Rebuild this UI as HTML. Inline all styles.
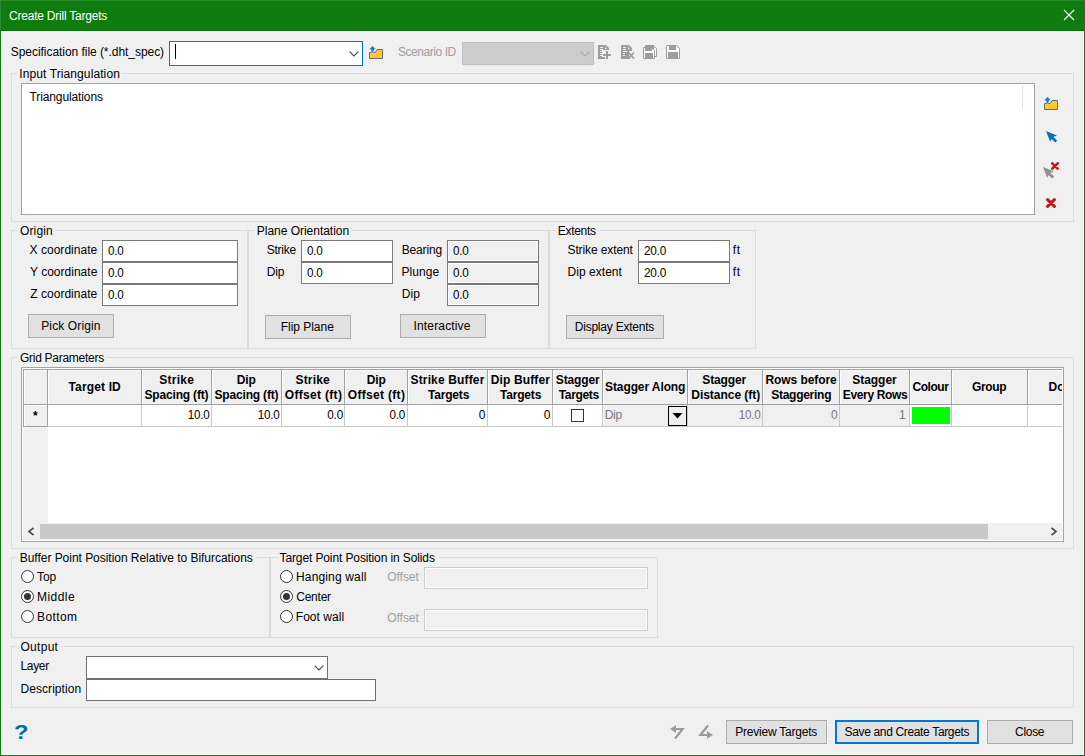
<!DOCTYPE html>
<html lang="en">
<head>
<meta charset="utf-8">
<title>Create Drill Targets</title>
<style>
html,body{margin:0;padding:0;}
body{width:1085px;height:756px;overflow:hidden;background:#f0f0f0;font-family:"Liberation Sans",sans-serif;font-size:12px;color:#000;position:relative;}
div,span,svg{position:absolute;box-sizing:border-box;}
#win{left:0;top:0;width:1085px;height:756px;border:1px solid #107c10;border-top:none;background:#f0f0f0;}
#title{left:0;top:0;width:1085px;height:31px;background:#107c10;}
.t{white-space:nowrap;line-height:14px;height:14px;font-size:12px;}
.g{color:#787878;}
.g2{color:#a0a0a0;}
.w{color:#fff;}
.b{font-weight:bold;}
.gl{background:#f0f0f0;}
.grp{border:1px solid #dcdcdc;}
.in{border:1px solid #7a7a7a;background:#fff;}
.ro{border:1px solid #7a7a7a;background:#f0f0f0;box-shadow:inset 0 0 0 1px #fff;}
.dis{border:1px solid #cccccc;background:#f0f0f0;box-shadow:inset 0 0 0 1px #fff;}
.btn{border:1px solid #adadad;background:#e1e1e1;}
.hc{border-right:1px solid #a0a0a0;border-bottom:1px solid #a0a0a0;background:#f0f0f0;box-shadow:inset 1px 1px 0 #fff;}
.dc{border-right:1px solid #c8c8c8;border-bottom:1px solid #c8c8c8;background:#fff;}
.dcd{background:#f0f0f0;}
.rad{width:13px;height:13px;border:1px solid #333;border-radius:50%;background:#fff;}
.rad i{position:absolute;left:2px;top:2px;width:7px;height:7px;border-radius:50%;background:#333;}
</style>
</head>
<body>
<div id="win"></div>
<div id="title"></div>
<div style="left:0;top:0;width:1085px;height:1px;background:#2b8a2b"></div>
<div style="left:0;top:0;width:1px;height:30px;background:#2b8a2b"></div>
<div style="left:1px;top:30px;width:1083px;height:1px;background:#007000"></div>
<div style="left:1px;top:31px;width:1083px;height:724px;border:1px solid #fcf8fc"></div>
<svg style="left:1063px;top:9px" width="12" height="12" viewBox="0 0 12 12"><path d="M1 1 L11 11 M11 1 L1 11" stroke="#fff" stroke-width="1.1" fill="none"/></svg>
<div class="grp" style="left:11px;top:73px;width:1063px;height:149px;"></div>
<div class="grp" style="left:11px;top:230px;width:237px;height:119px;"></div>
<div class="grp" style="left:248px;top:230px;width:301px;height:119px;"></div>
<div class="grp" style="left:549px;top:230px;width:207px;height:119px;"></div>
<div class="grp" style="left:11px;top:357px;width:1063px;height:192px;"></div>
<div class="grp" style="left:11px;top:557px;width:259px;height:81px;"></div>
<div class="grp" style="left:270px;top:557px;width:388px;height:81px;"></div>
<div class="grp" style="left:11px;top:646px;width:1063px;height:62px;"></div>
<div class="in" style="left:169px;top:41px;width:194px;height:25px;border-color:#0078d7;"></div>
<div style="left:175px;top:44px;width:1px;height:15px;background:#000"></div>
<svg style="left:349px;top:51px" width="10" height="6" viewBox="0 0 10 6"><path d="M0.7 0.7 L5 5 L9.3 0.7" stroke="#444" stroke-width="1.1" fill="none"/></svg>
<div class="" style="left:462px;top:42px;width:132px;height:23px;background:#ccc;border:1px solid #bfbfbf;"></div>
<svg style="left:580px;top:51px" width="10" height="6" viewBox="0 0 10 6"><path d="M0.7 0.7 L5 5 L9.3 0.7" stroke="#a6a6a6" stroke-width="1.1" fill="none"/></svg>
<svg style="left:369px;top:46px;overflow:visible" width="14" height="14" viewBox="0 0 14 14"><path d="M0.5 6.5 H6.2 L8 3.5 H13.5 V12.5 H0.5 Z" fill="#fcc934" stroke="#6b6b6b" stroke-width="1"/><path d="M3.5 -0.2 L7.2 3.6 H5 V6 H2 V3.6 H-0.2 Z" fill="#157ab8" stroke="#f0f0f0" stroke-width="0.6"/></svg>
<svg style="left:1044px;top:97px;overflow:visible" width="14" height="14" viewBox="0 0 14 14"><path d="M0.5 6.5 H6.2 L8 3.5 H13.5 V12.5 H0.5 Z" fill="#fcc934" stroke="#6b6b6b" stroke-width="1"/><path d="M3.5 -0.2 L7.2 3.6 H5 V6 H2 V3.6 H-0.2 Z" fill="#157ab8" stroke="#f0f0f0" stroke-width="0.6"/></svg>
<svg style="left:598px;top:45px" width="14" height="14" viewBox="0 0 14 14" shape-rendering="crispEdges"><path d="M0 0 H8 L11 3 V14 H0 Z" fill="#9d9d9d" shape-rendering="auto"/><path d="M7 2 L9 4 H7 Z" fill="#f0f0f0" shape-rendering="auto"/><rect x="2" y="2" width="3" height="1" fill="#f0f0f0"/><rect x="2" y="4" width="3" height="1" fill="#f0f0f0"/><rect x="2" y="6" width="4" height="1" fill="#f0f0f0"/><rect x="2" y="8" width="2" height="1" fill="#f0f0f0"/><rect x="2" y="10" width="2" height="1" fill="#f0f0f0"/><rect x="4" y="5" width="10" height="9" fill="#f0f0f0"/><rect x="0" y="12" width="7" height="2" fill="#9d9d9d"/><rect x="8" y="6" width="2" height="8" fill="#9d9d9d"/><rect x="5" y="9" width="8" height="2" fill="#9d9d9d"/></svg>
<svg style="left:621px;top:45px" width="14" height="14" viewBox="0 0 14 14" shape-rendering="crispEdges"><path d="M0 0 H8 L11 3 V14 H0 Z" fill="#9d9d9d" shape-rendering="auto"/><path d="M7 2 L9 4 H7 Z" fill="#f0f0f0" shape-rendering="auto"/><rect x="2" y="2" width="3" height="1" fill="#f0f0f0"/><rect x="2" y="4" width="3" height="1" fill="#f0f0f0"/><rect x="2" y="6" width="4" height="1" fill="#f0f0f0"/><rect x="2" y="8" width="2" height="1" fill="#f0f0f0"/><rect x="2" y="10" width="2" height="1" fill="#f0f0f0"/><rect x="6" y="6" width="8" height="8" fill="#f0f0f0"/><rect x="6" y="6" width="2" height="8" fill="#9d9d9d"/><path d="M7.5 7.5 L13 13.5 M13 7.5 L7.5 13.5" stroke="#9d9d9d" stroke-width="1.8" fill="none" shape-rendering="auto"/></svg>
<svg style="left:643px;top:45px" width="14" height="14" viewBox="0 0 14 14"><g transform="translate(2,0)"><path d="M0.5 0.5 H8.5 L11.5 3.5 V11.5 H0.5 Z" fill="#fff" stroke="#9d9d9d" stroke-width="1"/><rect x="1" y="0" width="8" height="6" fill="#9d9d9d"/></g><g transform="translate(0,2)"><path d="M0.5 0.5 H8.5 L11.5 3.5 V11.5 H0.5 Z" fill="#fff" stroke="#9d9d9d" stroke-width="1"/><rect x="2" y="0" width="7" height="4" fill="#9d9d9d"/><rect x="2" y="6" width="8" height="6" fill="#9d9d9d"/></g></svg>
<svg style="left:666px;top:45px" width="14" height="14" viewBox="0 0 14 14"><g transform="translate(0,0)"><path d="M0.5 0.5 H10.5 L13.5 3.5 V13.5 H0.5 Z" fill="#fff" stroke="#9d9d9d" stroke-width="1"/><rect x="3" y="0" width="7" height="5" fill="#9d9d9d"/><rect x="2" y="7" width="10" height="7" fill="#9d9d9d"/></g></svg>
<div class="in" style="left:21px;top:83px;width:1014px;height:132px;border-color:#a0a4ad;"></div>
<div style="left:1022px;top:85px;width:1px;height:24px;background:#e5e5e5"></div>
<svg style="left:1046px;top:131px" width="12" height="12" viewBox="0 0 12 12"><path d="M0 0 L11 4.5 L7.3 6 L11.2 9.6 L9.2 11.6 L5.5 7.9 L4.3 11 Z" fill="#0b72ad"/></svg>
<svg style="left:1043px;top:162px;" width="17" height="17" viewBox="0 0 17 17"><path transform="translate(0,5)" d="M0 0 L11 4.5 L7.3 6 L11.2 9.6 L9.2 11.6 L5.5 7.9 L4.3 11 Z" fill="#8f8f8f"/><path d="M9.3 1.3 L14.7 6.7 M14.7 1.3 L9.3 6.7" stroke="#c4161c" stroke-width="2.6" stroke-linecap="round" fill="none"/></svg>
<svg style="left:1046px;top:198px" width="10" height="10" viewBox="0 0 10 10"><path d="M1.6 1.6 L8.4 8.4 M8.4 1.6 L1.6 8.4" stroke="#c4161c" stroke-width="3" stroke-linecap="round" fill="none"/></svg>
<div class="in" style="left:102px;top:240px;width:136px;height:22px;"></div>
<div class="in" style="left:102px;top:262px;width:136px;height:22px;"></div>
<div class="in" style="left:102px;top:284px;width:136px;height:22px;"></div>
<div class="btn" style="left:28px;top:314px;width:86px;height:24px;"></div>
<div class="in" style="left:301px;top:240px;width:92px;height:22px;"></div>
<div class="in" style="left:301px;top:262px;width:92px;height:22px;"></div>
<div class="ro" style="left:447px;top:240px;width:92px;height:22px;"></div>
<div class="ro" style="left:447px;top:262px;width:92px;height:22px;"></div>
<div class="ro" style="left:447px;top:284px;width:92px;height:22px;"></div>
<div class="btn" style="left:265px;top:315px;width:86px;height:24px;"></div>
<div class="btn" style="left:400px;top:314px;width:86px;height:24px;"></div>
<div class="in" style="left:638px;top:240px;width:92px;height:22px;"></div>
<div class="in" style="left:638px;top:262px;width:92px;height:22px;"></div>
<div class="btn" style="left:566px;top:315px;width:98px;height:24px;"></div>
<div class="" style="left:21px;top:367px;width:1043px;height:175px;border:1px solid #a0a4ad;background:#fff;"></div>
<div style="left:23px;top:369px;width:1039px;height:1px;background:#a0a0a0"></div>
<div style="left:23px;top:369px;width:1px;height:58px;background:#a0a0a0"></div>
<div class="hc" style="left:24px;top:370px;width:24px;height:35px;"></div>
<div class="hc" style="left:48px;top:370px;width:94px;height:35px;"></div>
<div class="hc" style="left:142px;top:370px;width:70px;height:35px;"></div>
<div class="hc" style="left:212px;top:370px;width:70px;height:35px;"></div>
<div class="hc" style="left:282px;top:370px;width:63px;height:35px;"></div>
<div class="hc" style="left:345px;top:370px;width:63px;height:35px;"></div>
<div class="hc" style="left:408px;top:370px;width:80px;height:35px;"></div>
<div class="hc" style="left:488px;top:370px;width:65px;height:35px;"></div>
<div class="hc" style="left:553px;top:370px;width:50px;height:35px;"></div>
<div class="hc" style="left:603px;top:370px;width:85px;height:35px;"></div>
<div class="hc" style="left:688px;top:370px;width:75px;height:35px;"></div>
<div class="hc" style="left:763px;top:370px;width:77px;height:35px;"></div>
<div class="hc" style="left:840px;top:370px;width:70px;height:35px;"></div>
<div class="hc" style="left:910px;top:370px;width:42px;height:35px;"></div>
<div class="hc" style="left:952px;top:370px;width:76px;height:35px;"></div>
<div class="hc" style="left:1028px;top:370px;width:34px;height:35px;border-right:none;"></div>
<div class="hc" style="left:24px;top:405px;width:24px;height:22px;"></div>
<div class="dc" style="left:48px;top:405px;width:94px;height:22px;"></div>
<div class="dc" style="left:142px;top:405px;width:70px;height:22px;"></div>
<div class="dc" style="left:212px;top:405px;width:70px;height:22px;"></div>
<div class="dc" style="left:282px;top:405px;width:63px;height:22px;"></div>
<div class="dc" style="left:345px;top:405px;width:63px;height:22px;"></div>
<div class="dc" style="left:408px;top:405px;width:80px;height:22px;"></div>
<div class="dc" style="left:488px;top:405px;width:65px;height:22px;"></div>
<div class="dc" style="left:553px;top:405px;width:50px;height:22px;"></div>
<div class="dc dcd" style="left:603px;top:405px;width:85px;height:22px;"></div>
<div class="dc dcd" style="left:688px;top:405px;width:75px;height:22px;"></div>
<div class="dc dcd" style="left:763px;top:405px;width:77px;height:22px;"></div>
<div class="dc dcd" style="left:840px;top:405px;width:70px;height:22px;"></div>
<div class="dc" style="left:910px;top:405px;width:42px;height:22px;"></div>
<div class="dc" style="left:952px;top:405px;width:76px;height:22px;"></div>
<div class="dc" style="left:1028px;top:405px;width:34px;height:22px;border-right:none;"></div>
<div class="" style="left:23px;top:427px;width:25px;height:96px;background:#f0f0f0;"></div>
<div class="" style="left:571px;top:409px;width:13px;height:13px;border:1px solid #333;background:#fff;"></div>
<div class="" style="left:668px;top:406px;width:19px;height:20px;border:1px solid #000;background:#f0f0f0;"></div>
<svg style="left:672px;top:413px" width="11" height="6" viewBox="0 0 11 6"><path d="M0.5 0 H10.5 L5.5 5.5 Z" fill="#000"/></svg>
<div class="" style="left:912px;top:407px;width:38px;height:17px;background:#00ff00;"></div>
<div style="left:1028px;top:370px;width:34px;height:34px;overflow:hidden;"><span class="t b" style="left:20.5px;top:10px;">Do</span></div>
<div class="" style="left:23px;top:523px;width:1039px;height:17px;background:#f0f0f0;"></div>
<div class="" style="left:40px;top:524px;width:948px;height:15px;background:#c8c8c8;"></div>
<svg style="left:27px;top:527px" width="8" height="9" viewBox="0 0 8 9"><path d="M6.5 0.8 L2 4.5 L6.5 8.2" stroke="#484848" stroke-width="1.7" fill="none"/></svg>
<svg style="left:1050px;top:527px" width="8" height="9" viewBox="0 0 8 9"><path d="M1.5 0.8 L6 4.5 L1.5 8.2" stroke="#484848" stroke-width="1.7" fill="none"/></svg>
<div class="rad" style="left:21px;top:570px"></div>
<div class="rad" style="left:21px;top:590px"><i></i></div>
<div class="rad" style="left:21px;top:610px"></div>
<div class="rad" style="left:280px;top:570px"></div>
<div class="rad" style="left:280px;top:590px"><i></i></div>
<div class="rad" style="left:280px;top:610px"></div>
<div class="dis" style="left:424px;top:567px;width:224px;height:22px;"></div>
<div class="dis" style="left:424px;top:609px;width:224px;height:22px;"></div>
<div class="in" style="left:86px;top:656px;width:242px;height:23px;border-color:#707070;"></div>
<svg style="left:314px;top:665px" width="10" height="6" viewBox="0 0 10 6"><path d="M0.7 0.7 L5 5 L9.3 0.7" stroke="#444" stroke-width="1.1" fill="none"/></svg>
<div class="in" style="left:86px;top:679px;width:290px;height:22px;border-color:#707070;"></div>
<span class="t b" id="qm" style="left:14px;top:720px;font-size:20px;line-height:24px;height:24px;color:#006ca5;transform:scaleX(1.18);transform-origin:0 0;">?</span>
<svg style="left:669px;top:724px" width="16" height="16" viewBox="0 0 16 16"><path d="M1 5 L7 1 V9 Z" fill="#9b9b9b"/><path d="M6 5 H13.6 L6 14.5" stroke="#9b9b9b" stroke-width="2.2" fill="none" stroke-linejoin="miter"/></svg>
<svg style="left:698px;top:724px" width="16" height="16" viewBox="0 0 16 16"><path d="M15 11 L9 7 V15 Z" fill="#9b9b9b"/><path d="M10 11 H2.4 L10 1.5" stroke="#9b9b9b" stroke-width="2.2" fill="none" stroke-linejoin="miter"/></svg>
<div class="btn" style="left:726px;top:720px;width:101px;height:24px;"></div>
<div class="btn" style="left:835px;top:720px;width:144px;height:24px;border:2px solid #0078d7;"></div>
<div class="btn" style="left:987px;top:720px;width:86px;height:24px;"></div>
<span class="t w" style="left:9.0px;top:9px;letter-spacing:-0.22px;">Create Drill Targets</span>
<span class="t" style="left:10.75px;top:45px;letter-spacing:-0.046px;">Specification file (*.dht_spec)</span>
<span class="t g2" style="left:398.0px;top:45px;letter-spacing:-0.443px;">Scenario ID</span>
<div style="left:17.25px;top:71px;width:104px;height:4px;background:#f0f0f0"></div>
<span class="t" style="left:19.25px;top:67px;letter-spacing:0.103px;">Input Triangulation</span>
<span class="t" style="left:29.5px;top:90px;letter-spacing:-0.115px;">Triangulations</span>
<div style="left:18.0px;top:228px;width:37px;height:4px;background:#f0f0f0"></div>
<span class="t" style="left:20.0px;top:224px;letter-spacing:0.135px;">Origin</span>
<span class="t" style="left:29.5px;top:243px;letter-spacing:0.036px;">X coordinate</span>
<span class="t" style="left:30.0px;top:265px;letter-spacing:0.015px;">Y coordinate</span>
<span class="t" style="left:30.25px;top:287px;letter-spacing:0.027px;">Z coordinate</span>
<span class="t" style="left:107.75px;top:244px;transform:scaleX(0.974);transform-origin:0 0;letter-spacing:-0.25px;">0.0</span>
<span class="t" style="left:107.75px;top:266px;transform:scaleX(0.974);transform-origin:0 0;letter-spacing:-0.25px;">0.0</span>
<span class="t" style="left:107.75px;top:288px;transform:scaleX(0.974);transform-origin:0 0;letter-spacing:-0.25px;">0.0</span>
<span class="t" style="left:41.25px;top:319px;letter-spacing:0.114px;">Pick Origin</span>
<div style="left:254.75px;top:228px;width:96px;height:4px;background:#f0f0f0"></div>
<span class="t" style="left:256.75px;top:224px;letter-spacing:-0.02px;">Plane Orientation</span>
<span class="t" style="left:266.75px;top:243px;letter-spacing:-0.238px;">Strike</span>
<span class="t" style="left:266.75px;top:265px;letter-spacing:-0.125px;">Dip</span>
<span class="t" style="left:306.75px;top:244px;transform:scaleX(0.974);transform-origin:0 0;letter-spacing:-0.25px;">0.0</span>
<span class="t" style="left:306.75px;top:266px;transform:scaleX(0.974);transform-origin:0 0;letter-spacing:-0.25px;">0.0</span>
<span class="t" style="left:401.75px;top:243px;letter-spacing:-0.159px;">Bearing</span>
<span class="t" style="left:401.5px;top:265px;letter-spacing:0.052px;">Plunge</span>
<span class="t" style="left:401.75px;top:287px;letter-spacing:0.126px;">Dip</span>
<span class="t" style="left:452.75px;top:244px;transform:scaleX(0.974);transform-origin:0 0;letter-spacing:-0.25px;">0.0</span>
<span class="t" style="left:452.75px;top:266px;transform:scaleX(0.974);transform-origin:0 0;letter-spacing:-0.25px;">0.0</span>
<span class="t" style="left:452.75px;top:288px;transform:scaleX(0.974);transform-origin:0 0;letter-spacing:-0.25px;">0.0</span>
<span class="t" style="left:280.75px;top:320px;letter-spacing:-0.032px;">Flip Plane</span>
<span class="t" style="left:413.5px;top:319px;letter-spacing:0.158px;">Interactive</span>
<div style="left:555.75px;top:228px;width:42px;height:4px;background:#f0f0f0"></div>
<span class="t" style="left:557.75px;top:224px;letter-spacing:-0.292px;">Extents</span>
<span class="t" style="left:567.5px;top:243px;letter-spacing:-0.109px;">Strike extent</span>
<span class="t" style="left:567.5px;top:265px;letter-spacing:0.043px;">Dip extent</span>
<span class="t" style="left:643.5px;top:244px;transform:scaleX(0.985);transform-origin:0 0;letter-spacing:-0.25px;">20.0</span>
<span class="t" style="left:643.5px;top:266px;transform:scaleX(0.985);transform-origin:0 0;letter-spacing:-0.25px;">20.0</span>
<span class="t" style="left:732.75px;top:243px;letter-spacing:0.6px;">ft</span>
<span class="t" style="left:732.75px;top:265px;letter-spacing:0.6px;">ft</span>
<span class="t" style="left:574.75px;top:320px;letter-spacing:-0.224px;">Display Extents</span>
<div style="left:18.0px;top:355px;width:88px;height:4px;background:#f0f0f0"></div>
<span class="t" style="left:20.0px;top:351px;letter-spacing:-0.277px;">Grid Parameters</span>
<div style="left:17.75px;top:555px;width:237px;height:4px;background:#f0f0f0"></div>
<span class="t" style="left:19.75px;top:551px;letter-spacing:-0.034px;">Buffer Point Position Relative to Bifurcations</span>
<div style="left:277.5px;top:555px;width:160px;height:4px;background:#f0f0f0"></div>
<span class="t" style="left:279.5px;top:551px;letter-spacing:-0.111px;">Target Point Position in Solids</span>
<span class="t" style="left:37.0px;top:570px;letter-spacing:-0.046px;">Top</span>
<span class="t" style="left:37.0px;top:590px;letter-spacing:0.448px;">Middle</span>
<span class="t" style="left:37.0px;top:610px;letter-spacing:0.421px;">Bottom</span>
<span class="t" style="left:296.0px;top:570px;letter-spacing:0.152px;">Hanging wall</span>
<span class="t" style="left:296.25px;top:590px;letter-spacing:-0.236px;">Center</span>
<span class="t" style="left:295.75px;top:610px;letter-spacing:0.048px;">Foot wall</span>
<span class="t g2" style="left:387.25px;top:570px;letter-spacing:-0.05px;">Offset</span>
<span class="t g2" style="left:387.25px;top:611px;letter-spacing:-0.05px;">Offset</span>
<div style="left:18.5px;top:644px;width:42px;height:4px;background:#f0f0f0"></div>
<span class="t" style="left:20.5px;top:640px;letter-spacing:0.285px;">Output</span>
<span class="t" style="left:20.5px;top:659px;letter-spacing:-0.325px;">Layer</span>
<span class="t" style="left:20.5px;top:682px;letter-spacing:0.062px;">Description</span>
<span class="t" style="left:735.25px;top:725px;letter-spacing:-0.225px;">Preview Targets</span>
<span class="t" style="left:844.5px;top:725px;letter-spacing:-0.341px;">Save and Create Targets</span>
<span class="t" style="left:1015.0px;top:725px;letter-spacing:-0.288px;">Close</span>
<span class="t b" style="left:68.5px;top:380px;letter-spacing:0.144px;">Target ID</span>
<span class="t b" style="left:159.25px;top:373px;letter-spacing:0.24px;">Strike</span>
<span class="t b" style="left:144.5px;top:388px;letter-spacing:-0.175px;">Spacing (ft)</span>
<span class="t b" style="left:236.75px;top:373px;letter-spacing:-0.18px;">Dip</span>
<span class="t b" style="left:214.5px;top:388px;letter-spacing:-0.175px;">Spacing (ft)</span>
<span class="t b" style="left:295.5px;top:373px;letter-spacing:0.183px;">Strike</span>
<span class="t b" style="left:284.75px;top:388px;letter-spacing:0.317px;">Offset (ft)</span>
<span class="t b" style="left:366.75px;top:373px;letter-spacing:-0.18px;">Dip</span>
<span class="t b" style="left:347.75px;top:388px;letter-spacing:0.317px;">Offset (ft)</span>
<span class="t b" style="left:410.5px;top:373px;letter-spacing:0.153px;">Strike Buffer</span>
<span class="t b" style="left:428.0px;top:388px;letter-spacing:-0.19px;">Targets</span>
<span class="t b" style="left:490.75px;top:373px;letter-spacing:0.126px;">Dip Buffer</span>
<span class="t b" style="left:500.0px;top:388px;letter-spacing:-0.19px;">Targets</span>
<span class="t b" style="left:555.75px;top:373px;letter-spacing:-0.123px;">Stagger</span>
<span class="t b" style="left:558.75px;top:388px;letter-spacing:-0.348px;">Targets</span>
<span class="t b" style="left:605.0px;top:380px;letter-spacing:-0.094px;">Stagger Along</span>
<span class="t b" style="left:702.25px;top:373px;letter-spacing:-0.123px;">Stagger</span>
<span class="t b" style="left:691.25px;top:388px;letter-spacing:-0.031px;">Distance (ft)</span>
<span class="t b" style="left:765.5px;top:373px;letter-spacing:-0.075px;">Rows before</span>
<span class="t b" style="left:771.25px;top:388px;letter-spacing:-0.273px;">Staggering</span>
<span class="t b" style="left:852.25px;top:373px;letter-spacing:-0.039px;">Stagger</span>
<span class="t b" style="left:842.75px;top:388px;letter-spacing:-0.335px;">Every Rows</span>
<span class="t b" style="left:912.5px;top:380px;letter-spacing:-0.45px;">Colour</span>
<span class="t b" style="left:972.0px;top:380px;letter-spacing:-0.325px;">Group</span>
<span class="t b" style="left:33.0px;top:409px;">*</span>
<span class="t" style="left:187.0px;top:408px;transform:scaleX(0.969);transform-origin:100% 0;letter-spacing:-0.25px;">10.0</span>
<span class="t" style="left:257.0px;top:408px;transform:scaleX(0.969);transform-origin:100% 0;letter-spacing:-0.25px;">10.0</span>
<span class="t" style="left:326.5px;top:408px;transform:scaleX(0.98);transform-origin:100% 0;letter-spacing:-0.25px;">0.0</span>
<span class="t" style="left:389.0px;top:408px;transform:scaleX(0.967);transform-origin:100% 0;letter-spacing:-0.25px;">0.0</span>
<span class="t" style="left:478.75px;top:408px;">0</span>
<span class="t" style="left:543.75px;top:408px;">0</span>
<span class="t g" style="left:604.75px;top:408px;letter-spacing:-0.297px;">Dip</span>
<span class="t g" style="left:737.75px;top:408px;transform:scaleX(0.969);transform-origin:100% 0;letter-spacing:-0.25px;">10.0</span>
<span class="t g" style="left:831.0px;top:408px;">0</span>
<span class="t g" style="left:899.0px;top:408px;">1</span>
</body>
</html>
